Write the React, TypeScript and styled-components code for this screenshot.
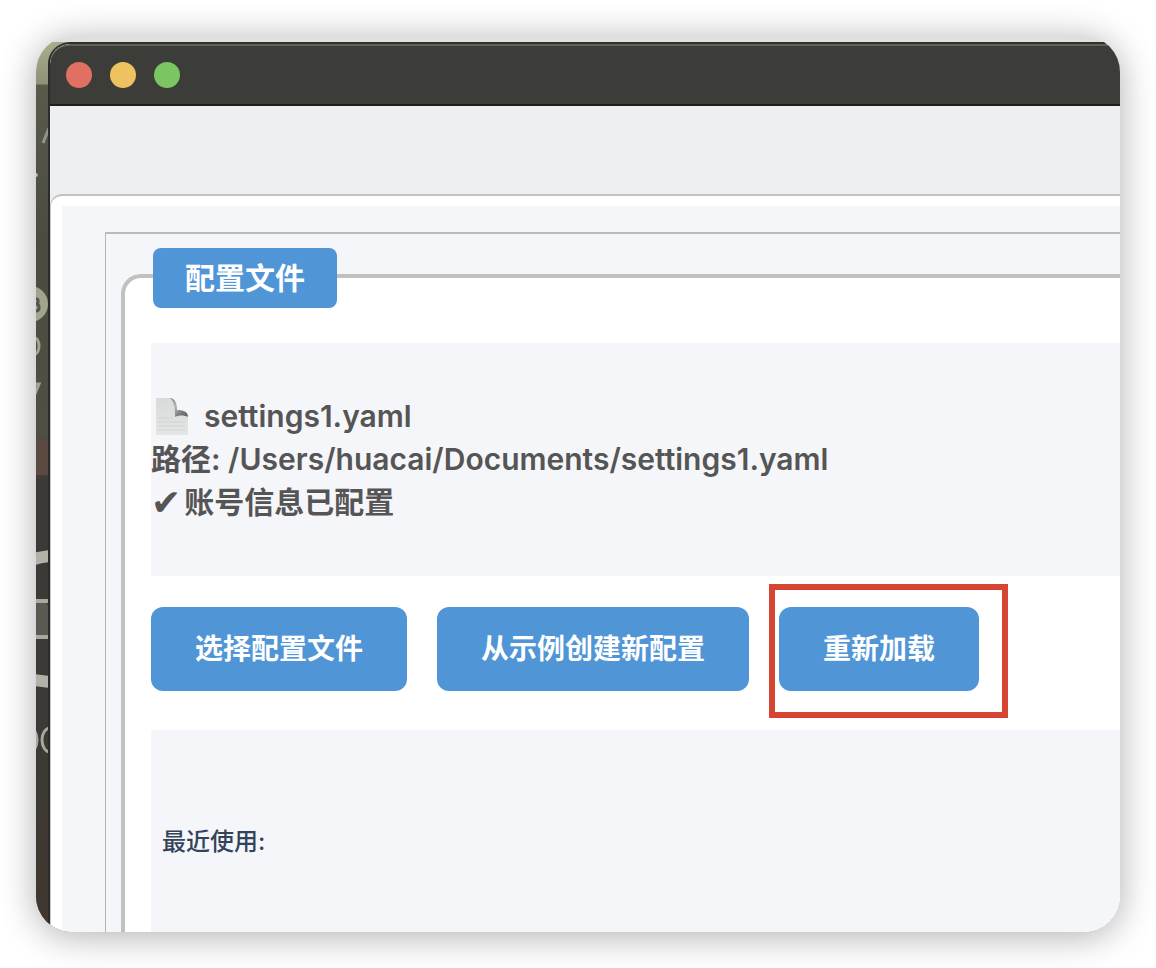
import React from "react";
import styled, { createGlobalStyle } from "styled-components";

const GlobalStyle = createGlobalStyle`
  *, *::before, *::after { box-sizing: border-box; }
  body {
    margin: 0;
    background: #ffffff;
    font-family: Inter, "Noto Sans CJK SC", sans-serif;
  }
`;

const Page = styled.div`
  min-height: 100vh;
  padding: 36px;
  display: flex;
`;

const Frame = styled.div`
  flex: 1;
  min-width: 0;
  display: flex;
  flex-direction: column;
  overflow: hidden;
  border-radius: 36px;
  background: linear-gradient(#dfdfdf 36px, #3c3d39 37px);
  box-shadow: 0 4px 36px rgba(0, 0, 0, 0.32);
`;

const TopEdge = styled.div`
  height: 6px;
  flex: none;
  background: #dfdfdf;
`;

const Desktop = styled.div`
  flex: 1;
  display: flex;
  background: linear-gradient(#a9ac8c, #8f9279 42px, #595a4c 43px, #4b4b40 200px, #504f45 390px, #3b3a36 440px, #3c3a36 700px, #40372f);
`;

const Wallpaper = styled.div`
  width: 12px;
  flex: none;
`;

const WallpaperDrawing = styled.svg`
  display: block;
  width: 12px;
  height: 720px;
`;

const Window = styled.main`
  flex: 1;
  min-width: 0;
  display: flex;
  flex-direction: column;
  overflow: hidden;
  border-left: 2px solid #2c2d2a;
  border-top: 2px solid #30312d;
  border-top-left-radius: 22px;
  background: #eeeff1;
`;

const TitleBar = styled.header`
  height: 62px;
  flex: none;
  display: flex;
  align-items: center;
  gap: 18px;
  padding-left: 16px;
  background: #3c3d39;
  border-top: 2px solid #5e605a;
  border-bottom: 2px solid #1f201e;
  border-top-left-radius: 20px;
`;

const Light = styled.button<{ $color: string }>`
  width: 26px;
  height: 26px;
  padding: 0;
  border: 0;
  border-radius: 50%;
  background: ${(p) => p.$color};
`;

const Toolbar = styled.div`
  height: 88px;
  flex: none;
  background: #eeeff1;
`;

const TabPane = styled.div`
  flex: 1;
  display: flex;
  padding: 10px 0 0 11px;
  background: #ffffff;
  border-top: 2px solid #bfc4c6;
  border-left: 1px solid #c4c7c9;
  border-top-left-radius: 12px;
`;

const Content = styled.div`
  flex: 1;
  min-width: 0;
  display: flex;
  padding: 26px 0 0 43px;
  background: #f5f6fa;
`;

const ScrollArea = styled.div`
  flex: 1;
  min-width: 0;
  display: flex;
  padding: 40px 0 0 15px;
  border-top: 2px solid #b9babe;
  border-left: 1px solid #b3b4b7;
`;

const Group = styled.section`
  flex: 1;
  min-width: 0;
  display: flex;
  flex-direction: column;
  align-items: stretch;
  padding-left: 26px;
  background: #ffffff;
  border-top: 4px solid #c0c1c2;
  border-left: 4px solid #c0c1c2;
  border-top-left-radius: 20px;
`;

const GroupTitle = styled.h2`
  align-self: flex-start;
  margin: -30px 0 35px 2px;
  padding: 0 32px;
  font-size: 30px;
  line-height: 60px;
  font-weight: 700;
  color: #ffffff;
  background: #5096d7;
  border-radius: 8px;
`;

const FileInfo = styled.div`
  padding: 52px 0;
  background: #f5f6fa;
  color: #555555;
  font-size: 30px;
  line-height: 43px;
  font-weight: 600;
`;

const InfoLine = styled.p`
  margin: 0;
  height: 43px;
  display: flex;
  align-items: center;
  white-space: pre;
`;

const PageIcon = styled.svg`
  width: 34px;
  height: 38px;
  flex: none;
  margin: 0 15px 0 4px;
`;

const Check = styled.span`
  font-family: "DejaVu Sans", sans-serif;
  font-size: 36px;
  margin-right: 3px;
`;

const Actions = styled.div`
  display: flex;
  gap: 30px;
  padding: 31px 0 39px;
`;

const ActionButton = styled.button`
  height: 84px;
  padding: 0 44px;
  border: 0;
  border-radius: 12px;
  background: #5096d7;
  color: #ffffff;
  font-family: inherit;
  font-size: 28px;
  font-weight: 700;
  line-height: 84px;
  white-space: nowrap;
`;

const Marked = styled.div`
  position: relative;
  display: flex;

  &::after {
    content: "";
    position: absolute;
    top: -23px;
    right: -29px;
    bottom: -27px;
    left: -10px;
    border: 6px solid #d64531;
    pointer-events: none;
  }
`;

const Recent = styled.section`
  flex: 1;
  padding: 94px 11px 40px;
  background: #f5f6fa;
`;

const RecentLabel = styled.h3`
  margin: 0;
  font-size: 24px;
  line-height: 36px;
  font-weight: 500;
  color: #34435a;
`;

const WallpaperArt = () => (
  <WallpaperDrawing viewBox="36 42 12 720" fill="none" aria-hidden="true">
    <path d="M43 143L49 128" stroke="#92938a" strokeWidth="3" />
    <circle cx="36" cy="175" r="2" fill="#b5b5ab" />
    <circle cx="30" cy="304" r="18" fill="#a3a48f" />
    <path d="M35 299c4-1 4 4 1 5 4 0 4 7 0 7" stroke="#55564a" strokeWidth="3" />
    <ellipse cx="35" cy="346" rx="4" ry="8" stroke="#a3a48f" strokeWidth="3" />
    <path d="M33 384h6l-4 10" stroke="#a3a48f" strokeWidth="3" />
    <path d="M36 440h12v35H36z" fill="#5b4a42" />
    <path d="M34 559Q41 557 50 556" stroke="#b3b2a9" strokeWidth="12" />
    <path d="M36 602h8q4 1 4 5v29H36z" fill="#5c5952" />
    <path d="M36 601h12M36 637h12" stroke="#aaa8a0" strokeWidth="4" />
    <path d="M34 680Q41 681 50 682" stroke="#b3b2a9" strokeWidth="12" />
    <ellipse cx="31" cy="740" rx="6" ry="11" stroke="#a9a79f" strokeWidth="3" />
    <ellipse cx="50" cy="740" rx="8" ry="12" stroke="#a9a79f" strokeWidth="3" />
  </WallpaperDrawing>
);

const DocumentIcon = () => (
  <PageIcon viewBox="0 0 34 38" aria-hidden="true">
    <defs>
      <linearGradient id="sheet" x1="0" y1="0" x2="0" y2="1">
        <stop offset="0" stopColor="#d9dada" />
        <stop offset="1" stopColor="#e4e5e5" />
      </linearGradient>
      <linearGradient id="curl" x1="0" y1="0" x2="1" y2="1">
        <stop offset="0" stopColor="#6f7271" />
        <stop offset="0.4" stopColor="#b4b6b5" />
        <stop offset="0.7" stopColor="#7b7e7d" />
        <stop offset="1" stopColor="#5c5f5e" />
      </linearGradient>
    </defs>
    <path d="M1 0h14c5 0 7 4 7 12 7 0 11 2 11 7v18H1z" fill="url(#sheet)" />
    <path d="M14 0c4 1 6 6 6 19 4-2 9-2 13 0 0-5-4-7-11-7 0-8-3-12-8-12z" fill="url(#curl)" />
    <path d="M3 20h15M3 24h27M3 28h27M3 32h27" stroke="#d2d3d3" strokeWidth="1" />
  </PageIcon>
);

export default function App() {
  return (
    <>
      <GlobalStyle />
      <Page>
        <Frame>
          <TopEdge />
          <Desktop>
            <Wallpaper>
              <WallpaperArt />
            </Wallpaper>
            <Window>
              <TitleBar>
                <Light $color="#e07062" aria-label="关闭" />
                <Light $color="#eec25f" aria-label="最小化" />
                <Light $color="#7bc562" aria-label="缩放" />
              </TitleBar>
              <Toolbar />
              <TabPane>
                <Content>
                  <ScrollArea>
                    <Group>
                      <GroupTitle>配置文件</GroupTitle>
                      <FileInfo>
                        <InfoLine>
                          <DocumentIcon />
                          settings1.yaml
                        </InfoLine>
                        <InfoLine>路径: /Users/huacai/Documents/settings1.yaml</InfoLine>
                        <InfoLine>
                          <Check>✔</Check>
                          账号信息已配置
                        </InfoLine>
                      </FileInfo>
                      <Actions>
                        <ActionButton>选择配置文件</ActionButton>
                        <ActionButton>从示例创建新配置</ActionButton>
                        <Marked>
                          <ActionButton>重新加载</ActionButton>
                        </Marked>
                      </Actions>
                      <Recent>
                        <RecentLabel>最近使用:</RecentLabel>
                      </Recent>
                    </Group>
                  </ScrollArea>
                </Content>
              </TabPane>
            </Window>
          </Desktop>
        </Frame>
      </Page>
    </>
  );
}
